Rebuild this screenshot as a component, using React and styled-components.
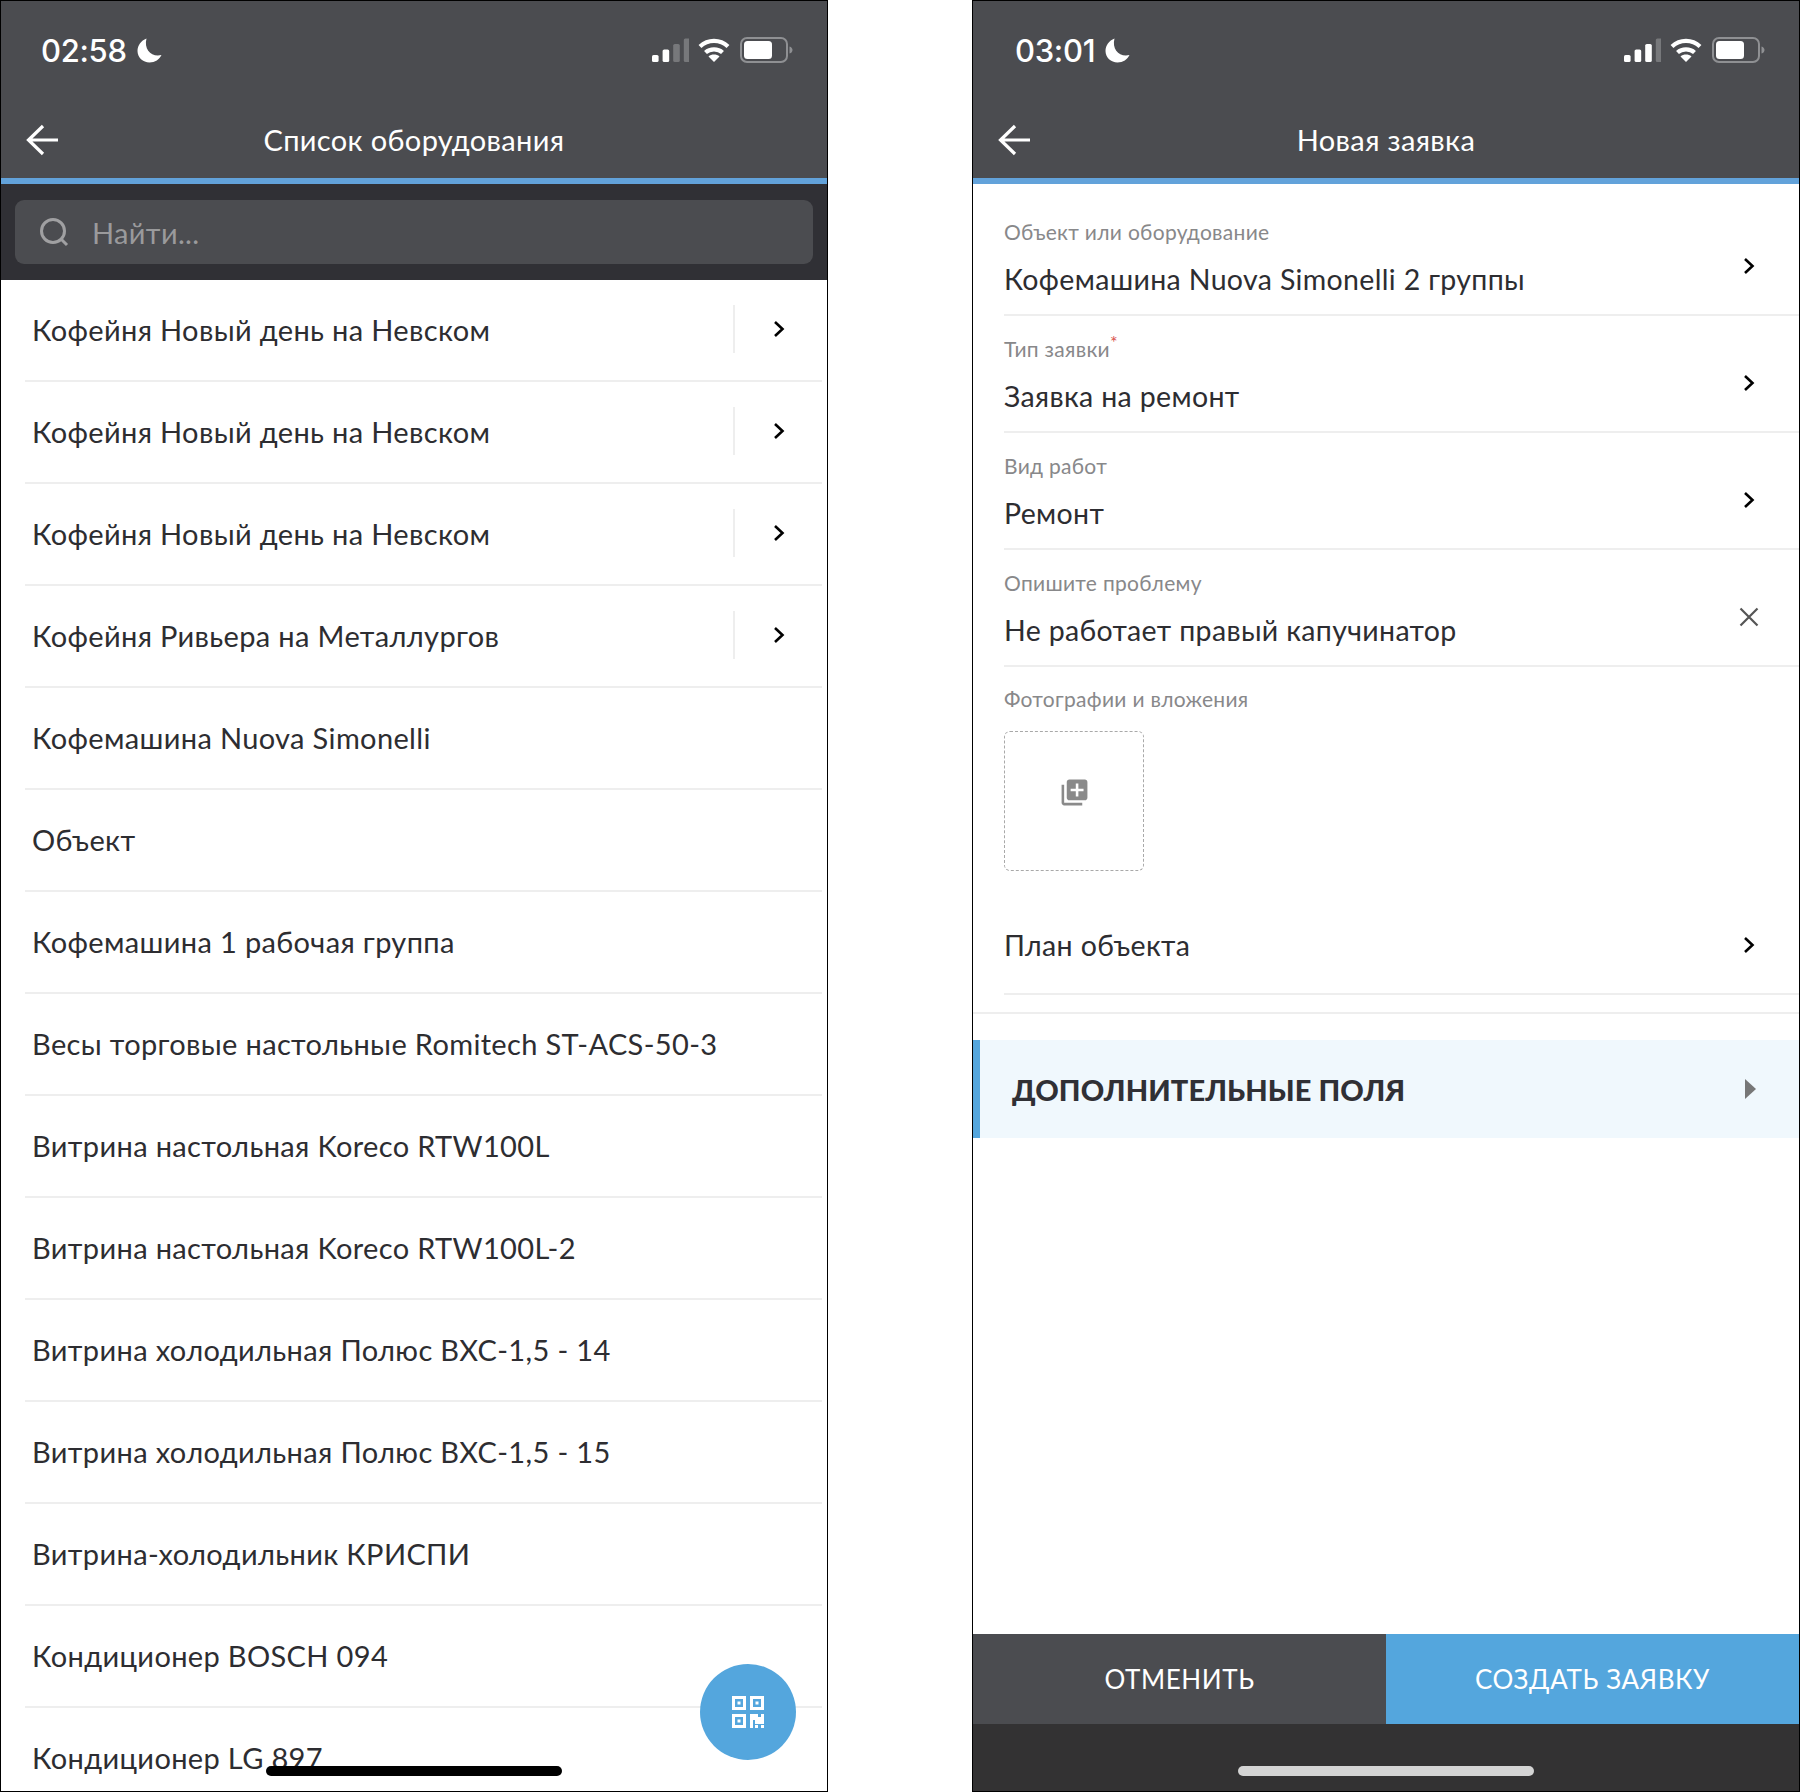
import React from "react";
import styled, { createGlobalStyle } from "styled-components";
import { MdLibraryAdd } from "react-icons/md";

const FONT = `Lato, "Open Sans", "Noto Sans", sans-serif`;

const Global = createGlobalStyle`
  html, body { margin: 0; padding: 0; background: #fff; }
  * { box-sizing: border-box; }
  body { font-family: ${FONT}; }
`;

const Page = styled.div`
  display: flex;
  justify-content: space-between;
  width: 1800px;
  height: 1792px;
`;
const Phone = styled.div`
  position: relative;
  display: flex;
  flex-direction: column;
  width: 828px;
  height: 1792px;
  border: 1px solid #000;
  overflow: hidden;
  background: #fff;
`;
const Header = styled.header`
  flex: none;
  height: 183px;
  background: #4b4c50;
  border-bottom: 6px solid #62a2da;
`;
const StatusBar = styled.div`
  display: flex;
  align-items: center;
  height: 98px;
  padding: 0 34px 0 ${(p) => p.$left}px;
`;
const Time = styled.span`
  font-family: Inter, "Liberation Sans", sans-serif;
  font-size: 31px;
  font-weight: 500;
  color: #fff;
  letter-spacing: -0.3px;
  line-height: 1;
`;
const MoonIcon = styled.svg`
  width: 25px;
  height: 25px;
  margin-left: ${(p) => p.$gap}px;
`;
const StatusIcons = styled.div`
  display: flex;
  align-items: center;
  margin-left: auto;
`;
const Signal = styled.svg`
  width: 37px;
  height: 24px;
  margin-right: 9px;
`;
const Wifi = styled.svg`
  width: 32px;
  height: 26px;
  margin-right: 10px;
`;
const Battery = styled.svg`
  width: 53px;
  height: 26px;
`;
const NavBar = styled.div`
  position: relative;
  display: flex;
  align-items: center;
  justify-content: center;
  height: 80px;
`;
const BackIcon = styled.svg`
  position: absolute;
  left: 24px;
  top: 25px;
  width: 34px;
  height: 32px;
`;
const Title = styled.h1`
  margin: 0;
  font-size: 29px;
  font-weight: 400;
  color: #fff;
  letter-spacing: 0.35px;
`;
const SearchSection = styled.div`
  flex: none;
  padding: 16px 14px;
  height: 96px;
  background: #303035;
`;
const SearchBox = styled.div`
  display: flex;
  align-items: center;
  height: 64px;
  padding-left: 24px;
  border-radius: 9px;
  background: #4b4c50;
`;
const SearchIcon = styled.svg`
  width: 30px;
  height: 30px;
  margin-right: 23px;
`;
const Placeholder = styled.span`
  font-size: 29px;
  color: #9a9a9c;
  letter-spacing: 0.35px;
`;
const List = styled.div`
  flex: 1;
  min-height: 0;
  padding: 0 5px 0 24px;
  overflow: hidden;
`;
const ListRow = styled.div`
  display: flex;
  align-items: center;
  height: 102px;
  padding: 0 0 2px 7px;
  border-bottom: 2px solid #eeeeee;
`;
const RowLabel = styled.span`
  flex: 1;
  font-size: 29px;
  color: #2d2d31;
  letter-spacing: 0.35px;
  white-space: nowrap;
`;
const RowAction = styled.div`
  display: flex;
  align-items: center;
  justify-content: center;
  width: 89px;
  height: 48px;
  padding-right: 0;
  border-left: 2px solid #eeeeee;
`;
const ChevronSvg = styled.svg`
  flex: none;
  width: 12px;
  height: 18px;
`;
const Fab = styled.button`
  position: absolute;
  left: 699px;
  top: 1663px;
  display: flex;
  align-items: center;
  justify-content: center;
  width: 96px;
  height: 96px;
  padding: 0;
  border: 0;
  border-radius: 50%;
  background: #54a6dd;
`;
const QrIcon = styled.svg`
  width: 32px;
  height: 32px;
`;
const HomeIndicator = styled.div`
  width: 296px;
  height: 10px;
  border-radius: 5px;
  background: ${(p) => p.$color};
`;
const FloatingIndicator = styled(HomeIndicator)`
  position: absolute;
  left: 265px;
  top: 1765px;
`;
const Form = styled.div`
  flex: 1;
  min-height: 0;
  padding-top: 15px;
`;
const Field = styled.div`
  position: relative;
  display: flex;
  align-items: ${(p) => (p.$plain ? "center" : "flex-start")};
  height: ${(p) => p.$h || 117}px;
  margin-left: 31px;
  padding: ${(p) => (p.$plain ? "0 0 0 0" : "20px 0 0 0")};
  border-bottom: 2px solid #eeeeee;
`;
const FieldBody = styled.div`
  flex: 1;
  min-width: 0;
`;
const FieldLabel = styled.div`
  height: 26px;
  font-size: 21px;
  line-height: 26px;
  color: #88888a;
  letter-spacing: 0.3px;
`;
const Required = styled.sup`
  color: #d9534f;
  font-size: 18px;
  line-height: 0;
`;
const FieldValue = styled.div`
  margin-top: 16px;
  height: 36px;
  font-size: 28.5px;
  line-height: 36px;
  color: #2d2d31;
  letter-spacing: 0.35px;
`;
const PlainValue = styled(FieldValue)`
  margin-top: 0;
`;
const FieldAction = styled.div`
  display: flex;
  align-items: center;
  justify-content: center;
  flex: none;
  width: 30px;
  height: 30px;
  margin: ${(p) => p.$top ?? 32}px 35px 0 0;
`;
const CloseIcon = styled.svg`
  width: 20px;
  height: 20px;
`;
const Attachments = styled.div`
  height: 230px;
  margin-left: 31px;
  padding-top: 19px;
`;
const AddBox = styled.div`
  display: flex;
  align-items: center;
  justify-content: center;
  width: 140px;
  height: 140px;
  margin-top: 19px;
  padding-bottom: 18px;
  border: 1.5px dashed #a9a9a9;
  border-radius: 6px;
  color: #8a8a8a;
`;
const FullRule = styled.div`
  height: 2px;
  margin-top: 17px;
  background: #eeeeee;
`;
const Section = styled.div`
  display: flex;
  align-items: center;
  justify-content: space-between;
  height: 98px;
  margin-top: 26px;
  padding: 0 43px 0 32px;
  background: #f0f8fd;
  border-left: 7px solid #54a6dd;
`;
const SectionTitle = styled.span`
  font-size: 29px;
  font-weight: 900;
  color: #303035;
  letter-spacing: 0.1px;
`;
const Triangle = styled.span`
  width: 0;
  height: 0;
  border-left: 11px solid #777;
  border-top: 10px solid transparent;
  border-bottom: 10px solid transparent;
`;
const Actions = styled.div`
  flex: none;
  display: grid;
  grid-template-columns: 413px 1fr;
  height: 90px;
`;
const ActionButton = styled.button`
  border: 0;
  padding: 0;
  font-family: ${FONT};
  font-size: 26px;
  font-weight: 400;
  color: #fff;
  letter-spacing: 0.6px;
  background: ${(p) => p.$bg};
`;
const Footer = styled.div`
  flex: none;
  display: flex;
  justify-content: center;
  height: 67px;
  padding-top: 42px;
  background: #333233;
`;

const Chevron = () => (
  <ChevronSvg viewBox="0 0 12 18" fill="none" stroke="#000" strokeWidth="2.6">
    <polyline points="2,2 9.5,9 2,16" />
  </ChevronSvg>
);

const Moon = ({ gap }) => (
  <MoonIcon $gap={gap} viewBox="0 0 25 25">
    <path fill="#fff" d="M9.5.5C4 2.5.5 7.5.5 13c0 6.5 5.5 11.5 12 11.5 5.5 0 10-3 12-7.5C15 19.5 6.5 12 9.5.5Z" />
  </MoonIcon>
);

const Status = ({ time, left, bars, gap }) => (
  <StatusBar $left={left}>
    <Time>{time}</Time>
    <Moon gap={gap} />
    <StatusIcons>
      <Signal viewBox="0 0 37 24">
        {[0, 1, 2, 3].map((i) => (
          <rect
            key={i}
            x={i * 10.6}
            y={17 - i * 5.5}
            width="6.6"
            height={7 + i * 5.5}
            rx="1.6"
            fill={i < bars ? "#fff" : "#77787b"}
          />
        ))}
      </Signal>
      <Wifi viewBox="0 0 32 26" fill="none" stroke="#fff" strokeWidth="4.2">
        <path d="M2 9.5C10 2 22 2 30 9.5" />
        <path d="M7.5 15.5C12 11.3 20 11.3 24.5 15.5" />
        <path fill="#fff" stroke="none" d="M16 25l-5.5-5.5c3-2.6 8-2.6 11 0Z" />
      </Wifi>
      <Battery viewBox="0 0 53 26" fill="none">
        <rect x="1" y="1" width="46" height="24" rx="6" stroke="#8f9093" strokeWidth="2" />
        <rect x="4" y="4" width="28" height="18" rx="3.5" fill="#fff" />
        <path d="M49.5 9.5c2 .5 3 2 3 3.5s-1 3-3 3.5Z" fill="#8f9093" />
      </Battery>
    </StatusIcons>
  </StatusBar>
);

const Nav = ({ title }) => (
  <NavBar>
    <BackIcon viewBox="0 0 34 32" fill="none" stroke="#fff" strokeWidth="3.2">
      <path d="M33 16H4M18 2 3.5 16 18 30" />
    </BackIcon>
    <Title>{title}</Title>
  </NavBar>
);

const items = [
  ["Кофейня Новый день на Невском", true],
  ["Кофейня Новый день на Невском", true],
  ["Кофейня Новый день на Невском", true],
  ["Кофейня Ривьера на Металлургов", true],
  ["Кофемашина Nuova Simonelli"],
  ["Объект"],
  ["Кофемашина 1 рабочая группа"],
  ["Весы торговые настольные Romitech ST-ACS-50-3"],
  ["Витрина настольная Koreco RTW100L"],
  ["Витрина настольная Koreco RTW100L-2"],
  ["Витрина холодильная Полюс ВХС-1,5 - 14"],
  ["Витрина холодильная Полюс ВХС-1,5 - 15"],
  ["Витрина-холодильник КРИСПИ"],
  ["Кондиционер BOSCH 094"],
  ["Кондиционер LG 897"],
];

const QrGlyph = () => (
  <QrIcon viewBox="0 0 32 32">
    <g fill="none" stroke="#fff" strokeWidth="3">
      <rect x="1.5" y="1.5" width="11" height="11" />
      <rect x="19.5" y="1.5" width="11" height="11" />
      <rect x="1.5" y="19.5" width="11" height="11" />
    </g>
    <g fill="#fff">
      <rect x="5.5" y="5.5" width="3" height="3" />
      <rect x="23.5" y="5.5" width="3" height="3" />
      <rect x="5.5" y="23.5" width="3" height="3" />
      <path d="M18 18h8v3h3v-3h3v10h-9v-4h-2v8h-3Z" />
      <rect x="23" y="29" width="3" height="3" />
      <rect x="29" y="29" width="3" height="3" />
    </g>
  </QrIcon>
);

export default function App() {
  return (
    <>
      <Global />
      <Page>
        <Phone>
          <Header>
            <Status time="02:58" left={40} bars={2} gap={10} />
            <Nav title="Список оборудования" />
          </Header>
          <SearchSection>
            <SearchBox>
              <SearchIcon viewBox="0 0 30 30" fill="none" stroke="#a0a0a2" strokeWidth="3">
                <circle cx="14" cy="14" r="11.5" />
                <path d="M22 22l6 6" />
              </SearchIcon>
              <Placeholder>Найти...</Placeholder>
            </SearchBox>
          </SearchSection>
          <List>
            {items.map(([label, nested], i) => (
              <ListRow key={i}>
                <RowLabel>{label}</RowLabel>
                {nested && (
                  <RowAction>
                    <Chevron />
                  </RowAction>
                )}
              </ListRow>
            ))}
          </List>
          <Fab aria-label="QR">
            <QrGlyph />
          </Fab>
          <FloatingIndicator $color="#000" />
        </Phone>

        <Phone>
          <Header>
            <Status time="03:01" left={42} bars={3} gap={10} />
            <Nav title="Новая заявка" />
          </Header>
          <Form>
            <Field>
              <FieldBody>
                <FieldLabel>Объект или оборудование</FieldLabel>
                <FieldValue>Кофемашина Nuova Simonelli 2 группы</FieldValue>
              </FieldBody>
              <FieldAction>
                <Chevron />
              </FieldAction>
            </Field>
            <Field>
              <FieldBody>
                <FieldLabel>
                  Тип заявки<Required>*</Required>
                </FieldLabel>
                <FieldValue>Заявка на ремонт</FieldValue>
              </FieldBody>
              <FieldAction>
                <Chevron />
              </FieldAction>
            </Field>
            <Field>
              <FieldBody>
                <FieldLabel>Вид работ</FieldLabel>
                <FieldValue>Ремонт</FieldValue>
              </FieldBody>
              <FieldAction>
                <Chevron />
              </FieldAction>
            </Field>
            <Field>
              <FieldBody>
                <FieldLabel>Опишите проблему</FieldLabel>
                <FieldValue>Не работает правый капучинатор</FieldValue>
              </FieldBody>
              <FieldAction>
                <CloseIcon viewBox="0 0 20 20" fill="none" stroke="#555" strokeWidth="2.2">
                  <path d="M1.5 1.5l17 17M18.5 1.5l-17 17" />
                </CloseIcon>
              </FieldAction>
            </Field>
            <Attachments>
              <FieldLabel>Фотографии и вложения</FieldLabel>
              <AddBox>
                <MdLibraryAdd size={31} />
              </AddBox>
            </Attachments>
            <Field $plain $h={98}>
              <FieldBody>
                <PlainValue>План объекта</PlainValue>
              </FieldBody>
              <FieldAction $top={0}>
                <Chevron />
              </FieldAction>
            </Field>
            <FullRule />
            <Section>
              <SectionTitle>ДОПОЛНИТЕЛЬНЫЕ ПОЛЯ</SectionTitle>
              <Triangle />
            </Section>
          </Form>
          <Actions>
            <ActionButton $bg="#4b4c50">ОТМЕНИТЬ</ActionButton>
            <ActionButton $bg="#54a6dd">СОЗДАТЬ ЗАЯВКУ</ActionButton>
          </Actions>
          <Footer>
            <HomeIndicator $color="#d4d4d4" />
          </Footer>
        </Phone>
      </Page>
    </>
  );
}
